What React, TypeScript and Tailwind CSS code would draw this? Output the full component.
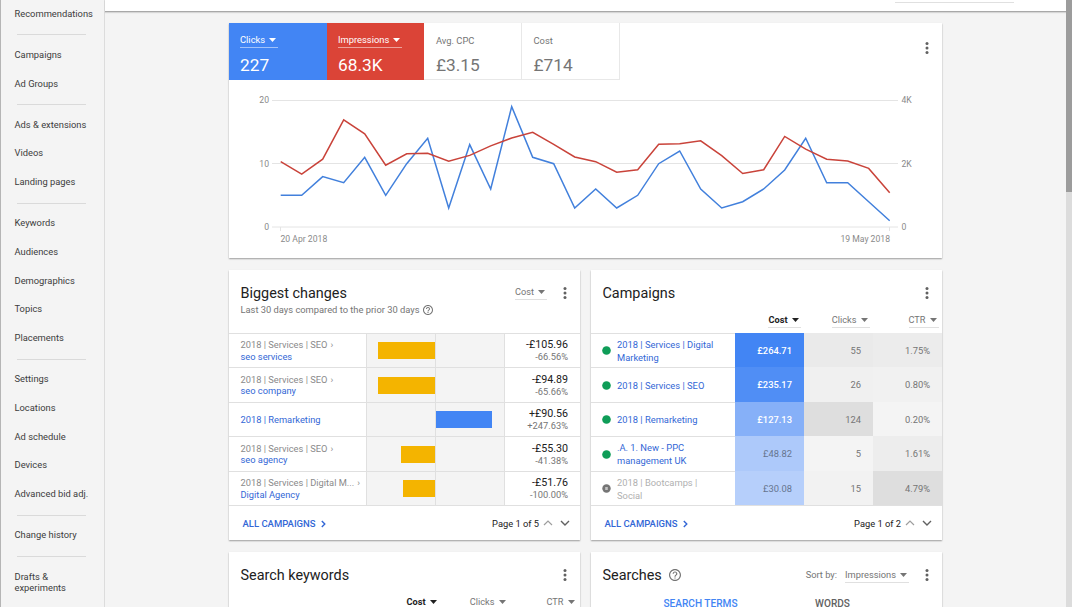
import React from 'react';
import clsx from 'clsx';

const NAV_GROUPS: string[][] = [
  ['Recommendations'],
  ['Campaigns', 'Ad Groups'],
  ['Ads & extensions', 'Videos', 'Landing pages'],
  ['Keywords', 'Audiences', 'Demographics', 'Topics', 'Placements'],
  ['Settings', 'Locations', 'Ad schedule', 'Devices', 'Advanced bid adj.'],
  ['Change history'],
  ['Drafts & experiments'],
];

const CLICKS = [5, 5, 7.95, 7, 11, 5, 10, 14, 3, 13, 6, 19, 11, 10, 3, 6, 3, 5, 10, 12, 6, 3, 4, 6, 9, 14, 7, 7, 4, 1];
// in thousands
const IMPRESSIONS = [
  2.06, 1.67, 2.14, 3.38, 2.94, 1.95, 2.31, 2.33, 2.08, 2.26, 2.56, 2.81, 2.99, 2.61, 2.21,
  2.06, 1.73, 1.81, 2.61, 2.63, 2.72, 2.25, 1.69, 1.81, 2.86, 2.46, 2.14, 2.08, 1.85, 1.08,
];

interface Change {
  parent?: string;
  name: string;
  amount: string;
  percent: string;
  bar: number;
}

const CHANGES: Change[] = [
  { parent: '2018 | Services | SEO', name: 'seo services', amount: '-£105.96', percent: '-66.56%', bar: -57 },
  { parent: '2018 | Services | SEO', name: 'seo company', amount: '-£94.89', percent: '-65.66%', bar: -57 },
  { name: '2018 | Remarketing', amount: '+£90.56', percent: '+247.63%', bar: 56 },
  { parent: '2018 | Services | SEO', name: 'seo agency', amount: '-£55.30', percent: '-41.38%', bar: -34.5 },
  { parent: '2018 | Services | Digital M...', name: 'Digital Agency', amount: '-£51.76', percent: '-100.00%', bar: -32 },
];

const CAMPAIGNS = [
  { name: '2018 | Services | Digital Marketing', cost: '£264.71', clicks: '55', ctr: '1.75%', costBg: 'bg-[#4285f4] text-white font-medium', clicksBg: 'bg-[#eaeaea]', ctrBg: 'bg-[#ececec]' },
  { name: '2018 | Services | SEO', cost: '£235.17', clicks: '26', ctr: '0.80%', costBg: 'bg-[#508ef5] text-white font-medium', clicksBg: 'bg-[#f0f0f0]', ctrBg: 'bg-[#f1f1f1]' },
  { name: '2018 | Remarketing', cost: '£127.13', clicks: '124', ctr: '0.20%', costBg: 'bg-[#86b0f8] text-white font-medium', clicksBg: 'bg-[#dedede]', ctrBg: 'bg-[#f4f4f4]' },
  { name: '.A. 1. New - PPC management UK', cost: '£48.82', clicks: '5', ctr: '1.61%', costBg: 'bg-[#adc9fa] text-[#66758f]', clicksBg: 'bg-[#f4f4f4]', ctrBg: 'bg-[#ededed]' },
  { name: '2018 | Bootcamps | Social', cost: '£30.08', clicks: '15', ctr: '4.79%', costBg: 'bg-[#b6cffb] text-[#66758f]', clicksBg: 'bg-[#f2f2f2]', ctrBg: 'bg-[#dedede]', paused: true },
];

const Triangle = () => (
  <svg width="7" height="4" viewBox="0 0 7 4" className="shrink-0">
    <path d="M0 0h7L3.5 3.9z" fill="currentColor" />
  </svg>
);

const Kebab = () => (
  <svg width="4" height="14" viewBox="0 0 4 14" className="shrink-0 text-[#616161]">
    <circle cx="2" cy="2.5" r="1.5" fill="currentColor" />
    <circle cx="2" cy="7" r="1.5" fill="currentColor" />
    <circle cx="2" cy="11.5" r="1.5" fill="currentColor" />
  </svg>
);

const Help = ({ size }: { size: number }) => (
  <svg width={size} height={size} viewBox="2 2 20 20" className="shrink-0 text-[#757575]">
    <path
      fill="currentColor"
      d="M11 18h2v-2h-2v2zm1-16C6.48 2 2 6.48 2 12s4.48 10 10 10 10-4.48 10-10S17.52 2 12 2zm0 18c-4.41 0-8-3.59-8-8s3.59-8 8-8 8 3.59 8 8-3.59 8-8 8zm0-14c-2.21 0-4 1.79-4 4h2c0-1.1.9-2 2-2s2 .9 2 2c0 2-3 1.75-3 5h2c0-2.25 3-2.5 3-5 0-2.21-1.79-4-4-4z"
    />
  </svg>
);

const Dropdown = ({ label, className }: { label: string; className?: string }) => (
  <span className={clsx('inline-flex h-[15px] items-center gap-1 border-b pr-[2px] leading-[14px]', className)}>
    {label}
    <Triangle />
  </span>
);

const Card = ({ className, children }: { className?: string; children: React.ReactNode }) => (
  <section className={clsx('bg-white shadow-[0_1px_1.5px_rgba(0,0,0,0.36)]', className)}>{children}</section>
);

const Sidebar = () => (
  <nav className="w-[105px] shrink-0 border-r border-l border-r-[#dcdcdc] border-l-[#b5b5b5] text-[9.36px] text-[#3c3c3c]">
    {NAV_GROUPS.map((group, i) => (
      <div key={group[0]}>
        {i > 0 && (
          <div className="flex h-[12.2px] items-center">
            <div className="ml-4 h-px w-[69px] bg-[#dadada]" />
          </div>
        )}
        {group.map((item) => (
          <div key={item} className="flex min-h-[28.77px] items-center pb-[1.5px] pl-[13.5px] leading-[11.5px]">
            <span className={item.startsWith('Drafts') ? 'w-[60px] pt-[8.5px]' : 'whitespace-nowrap'}>{item}</span>
          </div>
        ))}
      </div>
    ))}
  </nav>
);

const Chart = () => {
  const x = (i: number) => 51.7 + i * 21;
  const points = (data: number[], max: number) =>
    data.map((v, i) => `${x(i).toFixed(1)},${(147 - (v / max) * 126.7).toFixed(1)}`).join(' ');

  return (
    <svg width="713" height="178" viewBox="0 0 713 178" className="block text-[8.64px]">
      <g stroke="#e4e4e4">
        <path d="M43 20.5H669M43 83.5H669M43 147H669M51.5 147v4M660.5 147v4" fill="none" />
      </g>
      <g fill="#8a8a8a">
        <text x="40" y="23.2" textAnchor="end">20</text>
        <text x="40" y="86.7" textAnchor="end">10</text>
        <text x="40" y="150" textAnchor="end">0</text>
        <text x="672.5" y="23.2">4K</text>
        <text x="672.5" y="86.7">2K</text>
        <text x="672.5" y="150">0</text>
        <text x="51.5" y="162">20 Apr 2018</text>
        <text x="661" y="162" textAnchor="end">19 May 2018</text>
      </g>
      <polyline points={points(CLICKS, 20)} fill="none" stroke="#4280dc" strokeWidth="1.5" />
      <polyline points={points(IMPRESSIONS, 4)} fill="none" stroke="#c9433a" strokeWidth="1.5" />
    </svg>
  );
};

const Overview = () => (
  <Card className="h-[235.4px]">
    <div className="flex justify-between">
      <div className="flex h-[57px] text-[9.36px]">
        <div className="w-[97.5px] bg-[#4285f4] pt-[10px] pl-[11px] text-white">
          <Dropdown label="Clicks" className="border-white/50" />
          <div className="text-[17.3px] leading-[34px]">227</div>
        </div>
        <div className="w-[97.9px] bg-[#db4437] pt-[10px] pl-[11.5px] text-white">
          <Dropdown label="Impressions" className="border-white/50" />
          <div className="text-[17.3px] leading-[34px]">68.3K</div>
        </div>
        <div className="w-[97.6px] border-r border-b border-[#e8e8e8] pt-[10px] pl-[11.6px] text-[#757575]">
          <div className="h-[15px] leading-[15px]">Avg. CPC</div>
          <div className="text-[17.3px] leading-[34px]">£3.15</div>
        </div>
        <div className="w-[98px] border-r border-b border-[#e8e8e8] pt-[10px] pl-[11.5px] text-[#757575]">
          <div className="h-[15px] leading-[15px]">Cost</div>
          <div className="text-[17.3px] leading-[34px]">£714</div>
        </div>
      </div>
      <div className="pt-[18px] pr-[13px]">
        <Kebab />
      </div>
    </div>
    <Chart />
  </Card>
);

const CardFooter = ({ page }: { page: string }) => (
  <div className="flex h-[34px] items-center justify-between pr-[10px] pl-[13.5px]">
    <a className="flex items-center gap-[5px] pt-[2px] text-[9.5px] font-medium text-[#3367d6]">
      ALL CAMPAIGNS
      <svg width="5" height="8" viewBox="0 0 5 8" fill="none" stroke="currentColor" strokeWidth="1.4">
        <path d="M.8 1l3 3-3 3" />
      </svg>
    </a>
    <div className="flex items-center text-[9.3px] text-[#212121]">
      {page}
      <svg width="10" height="6" viewBox="0 0 10 6" fill="none" stroke="#9e9e9e" strokeWidth="1.2" className="ml-1">
        <path d="M1 5l4-4 4 4" />
      </svg>
      <svg width="10" height="6" viewBox="0 0 10 6" fill="none" stroke="#616161" strokeWidth="1.4" className="ml-[7px]">
        <path d="M1 1l4 4 4-4" />
      </svg>
    </div>
  </div>
);

const ColumnHeads = () => (
  <div className="flex justify-end text-[9.2px] text-[#757575]">
    {['Cost', 'Clicks', 'CTR'].map((label, i) => (
      <div key={label} className="flex w-[69px] justify-end pr-[3.5px]">
        <Dropdown label={label} className={clsx('border-[#e0e0e0]', i === 0 && 'font-bold text-[#212121]')} />
      </div>
    ))}
  </div>
);

const CardTitle = ({ children }: { children: React.ReactNode }) => (
  <h2 className="h-5 text-[14.4px] leading-[22px] text-[#212121]">{children}</h2>
);

const BiggestChanges = () => (
  <Card className="h-[270.2px]">
    <div className="flex h-[63px] justify-between pt-[13px] pr-[13px] pl-[11.5px]">
      <div>
        <CardTitle>Biggest changes</CardTitle>
        <div className="flex items-center gap-1 text-[9.33px] leading-[14px] text-[#757575]">
          Last 30 days compared to the prior 30 days
          <Help size={10} />
        </div>
      </div>
      <div className="flex h-5 items-center gap-[16px] text-[9.2px] text-[#757575]">
        <Dropdown label="Cost" className="border-[#e0e0e0]" />
        <Kebab />
      </div>
    </div>
    {CHANGES.map((row) => (
      <div key={row.name} className="flex h-[34.5px] border-t border-[#e0e0e0] text-[9.3px]">
        <div className="flex w-[137px] flex-col justify-center pl-[11.5px] leading-[11.5px]">
          {row.parent && (
            <div className="flex gap-[3px] whitespace-nowrap text-[#8a8a8a]">
              <span>{row.parent}</span>
              <span>›</span>
            </div>
          )}
          <a className="text-[#3367d6]">{row.name}</a>
        </div>
        <div className="flex w-[69px] items-center justify-end border-l border-[#e0e0e0] bg-[#f4f4f4]">
          {row.bar < 0 && <div className="h-[17px] bg-[#f4b400]" style={{ width: -row.bar }} />}
        </div>
        <div className="flex w-[69.5px] items-center border-r border-l border-[#e0e0e0] bg-[#f4f4f4]">
          {row.bar > 0 && <div className="h-[17px] bg-[#4285f4]" style={{ width: row.bar }} />}
        </div>
        <div className="flex flex-1 flex-col justify-center pt-px pr-[12px] text-right leading-[12px]">
          <div className="text-[10.7px] text-[#212121]">{row.amount}</div>
          <div className="text-[#757575]">{row.percent}</div>
        </div>
      </div>
    ))}
    <div className="border-t border-[#e0e0e0]">
      <CardFooter page="Page 1 of 5" />
    </div>
  </Card>
);

const Campaigns = () => (
  <Card className="h-[270.2px]">
    <div className="flex items-center justify-between pt-[13px] pr-[13px] pl-[11.5px]">
      <CardTitle>Campaigns</CardTitle>
      <Kebab />
    </div>
    <div className="h-[30px] pt-[10px]">
      <ColumnHeads />
    </div>
    {CAMPAIGNS.map((row) => (
      <div key={row.name} className="flex h-[34.5px] text-[9.36px] text-[#757575]">
        <div className="flex w-[144px] items-center gap-[6px] border-t border-[#e0e0e0] pl-[11px] leading-[13px]">
          {row.paused ? (
            <svg width="9" height="9" viewBox="0 0 9 9" className="shrink-0">
              <circle cx="4.5" cy="4.5" r="4.2" fill="#757575" />
              <path d="M3.2 3h2.6v3H3.2z" fill="#c4c4c4" />
            </svg>
          ) : (
            <svg width="9" height="9" viewBox="0 0 9 9" className="shrink-0">
              <circle cx="4.5" cy="4.5" r="4.3" fill="#0f9d58" />
            </svg>
          )}
          <a className={clsx('w-[104px]', row.paused ? 'text-[#b0b0b0]' : 'text-[#3367d6]')}>{row.name}</a>
        </div>
        <div className={clsx('flex w-[69px] items-center justify-end pt-px pr-[12px]', row.costBg)}>{row.cost}</div>
        <div className={clsx('flex w-[69px] items-center justify-end pt-px pr-[12px]', row.clicksBg)}>{row.clicks}</div>
        <div className={clsx('flex w-[69px] items-center justify-end pt-px pr-[12px]', row.ctrBg)}>{row.ctr}</div>
      </div>
    ))}
    <div className="border-t border-[#e0e0e0]">
      <CardFooter page="Page 1 of 2" />
    </div>
  </Card>
);

const SearchKeywords = () => (
  <Card className="h-[270px]">
    <div className="flex items-center justify-between pt-[13px] pr-[13px] pl-[11.5px]">
      <CardTitle>Search keywords</CardTitle>
      <Kebab />
    </div>
    <div className="pt-[10px]">
      <ColumnHeads />
    </div>
  </Card>
);

const Searches = () => (
  <Card className="h-[270px]">
    <div className="flex items-center justify-between pt-[13px] pr-[13px] pl-[11.5px]">
      <div className="flex items-center gap-[7px]">
        <CardTitle>Searches</CardTitle>
        <Help size={12} />
      </div>
      <div className="flex items-center text-[9.3px] text-[#757575]">
        <span className="mr-2">Sort by:</span>
        <Dropdown label="Impressions" className="mt-px mr-4 border-[#e0e0e0]" />
        <Kebab />
      </div>
    </div>
    <div className="mx-auto grid w-[264px] grid-cols-2 pt-[12px] text-center text-[10.1px] leading-[13px] font-medium">
      <div className="text-[#4285f4]">SEARCH TERMS</div>
      <div className="text-[#616161]">WORDS</div>
    </div>
  </Card>
);

export default function App() {
  return (
    <div className="flex h-[607px] w-[1072px] overflow-hidden bg-[#f4f4f4] font-[Roboto,sans-serif]">
      <Sidebar />
      <main className="flex-1">
        <div className="flex h-[12px] justify-end border-b border-[#a8a8a8] bg-white pt-[2px] pr-[52px] shadow-[0_1px_1px_rgba(0,0,0,0.12)]">
          <div className="h-px w-[119px] bg-[#e0e0e0]" />
        </div>
        <div className="ml-[124px] grid w-[713px] grid-cols-[351px_351px] gap-x-[11px] gap-y-[11.6px] pt-[11px]">
          <div className="col-span-2">
            <Overview />
          </div>
          <BiggestChanges />
          <Campaigns />
          <SearchKeywords />
          <Searches />
        </div>
      </main>
      <div className="w-[6px] shrink-0 bg-[#dcdcdc]">
        <div className="h-[192px] bg-[#9c9c9c]" />
      </div>
    </div>
  );
}
